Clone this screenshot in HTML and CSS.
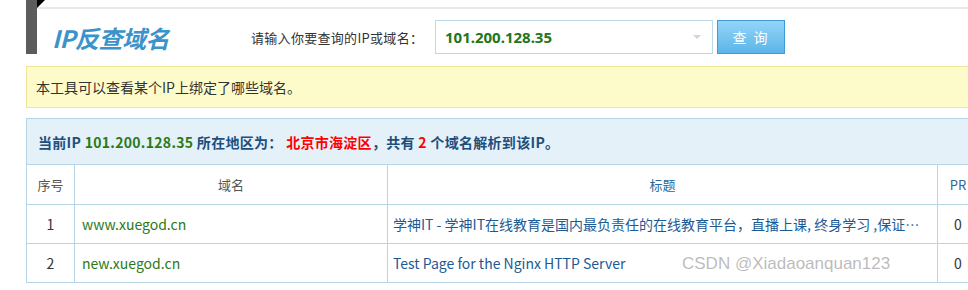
FILE: index.html
```html
<!DOCTYPE html>
<html lang="zh-CN">
<head>
    <meta charset="UTF-8">
    <title>IP反查域名</title>
    <link rel="stylesheet" href="styles.css">
</head>
<body>
    <div class="page">
        <div class="head">
            <div class="bar"></div>
            <div class="head-main">
                <h1 class="title">IP反查域名</h1>
                <label class="label" for="ip">请输入你要查询的IP或域名：</label>
                <div class="input-box">
                    <input type="text" id="ip" value="101.200.128.35">
                    <span class="arrow"></span>
                </div>
                <button type="button" class="btn">查 询</button>
            </div>
        </div>

        <div class="notice">本工具可以查看某个IP上绑定了哪些域名。</div>

        <table class="result">
            <colgroup>
                <col class="c-no">
                <col class="c-domain">
                <col class="c-title">
                <col class="c-pr">
            </colgroup>
            <tr class="info">
                <td colspan="4">当前IP <span class="green">101.200.128.35</span> 所在地区为： <span class="red">北京市海淀区</span>，共有 <span class="red">2</span> 个域名解析到该IP。</td>
            </tr>
            <tr class="cols">
                <th>序号</th>
                <th>域名</th>
                <th class="blue">标题</th>
                <th class="blue">PR</th>
            </tr>
            <tr>
                <td class="num">1</td>
                <td class="domain">www.xuegod.cn</td>
                <td class="page-title"><div class="clip">学神IT - 学神IT在线教育是国内最负责任的在线教育平台，直播上课, 终身学习 ,保证就业，学神IT在线教育</div></td>
                <td class="num">0</td>
            </tr>
            <tr>
                <td class="num">2</td>
                <td class="domain">new.xuegod.cn</td>
                <td class="page-title"><div class="clip">Test Page for the Nginx HTTP Server</div></td>
                <td class="num">0</td>
            </tr>
        </table>
    </div>
    <div class="watermark">CSDN @Xiadaoanquan123</div>
</body>
</html>
```

FILE: styles.css
```css
html, body {
    margin: 0;
    overflow: hidden;
}
body {
    font-family: "Noto Sans CJK SC", "Noto Sans", sans-serif;
    font-size: 14px;
    color: #333;
    background: #fff;
    position: relative;
    height: 290px;
}
.page {
    width: 960px;
    padding-left: 26px;
}
.head {
    display: flex;
    height: 54px;
}
.bar {
    flex-shrink: 0;
    width: 11px;
    height: 54px;
    background: #5c5c5c;
    position: relative;
}
.bar::after {
    content: "";
    position: absolute;
    left: 11px;
    top: 0;
    border-left: 8px solid #000;
    border-top: 8px solid transparent;
    width: 0;
    height: 0;
    transform: scaleY(-1);
}
.head-main {
    flex: 1;
    display: flex;
    align-items: center;
    margin-top: 7px;
    border-top: 2px solid #e9e9e9;
    padding-top: 11px;
    align-self: flex-start;
    height: 34px;
}
.head-main > * {
    flex-shrink: 0;
}
.title {
    width: 214px;
    margin: 0;
    padding-left: 15px;
    box-sizing: border-box;
    font-size: 24px;
    font-style: italic;
    font-weight: bold;
    color: #3b93cb;
    letter-spacing: -0.5px;
}
.label {
    width: 184px;
    font-size: 13px;
    color: #333;
    letter-spacing: 0.3px;
}
.input-box {
    position: relative;
    width: 278px;
    height: 34px;
}
.input-box input {
    width: 100%;
    height: 100%;
    box-sizing: border-box;
    border: 1px solid #bcdbea;
    padding: 0 9px;
    font-family: "Noto Sans", "Noto Sans CJK SC", sans-serif;
    font-size: 15px;
    font-weight: bold;
    color: #23741a;
    outline: none;
}
.arrow {
    position: absolute;
    right: 12px;
    top: 15px;
    border-left: 4px solid transparent;
    border-right: 4px solid transparent;
    border-top: 4px solid #c6d9e2;
}
.btn {
    margin-left: 4px;
    width: 68px;
    height: 34px;
    border: 1px solid #3d9cd8;
    background: linear-gradient(#93d5f7, #5cb5e8);
    color: #fff;
    font-family: "Noto Sans CJK SC", sans-serif;
    font-size: 14px;
    letter-spacing: 2px;
    padding: 0;
}
.notice {
    margin-top: 12px;
    height: 40px;
    line-height: 40px;
    background: #fefbcb;
    border: 1px solid #f2e49a;
    padding-left: 9px;
    font-size: 14px;
    color: #333;
}
.result {
    margin-top: 10px;
    border-collapse: collapse;
    table-layout: fixed;
    width: 952px;
}
.c-no { width: 48px; }
.c-domain { width: 313px; }
.c-title { width: 550px; }
.c-pr { width: 41px; }
.result td, .result th {
    border: 1px solid #b6d5e6;
    padding: 0;
    height: 38px;
    font-weight: normal;
}
.info td {
    height: 45px;
    background: #e5f1f9;
    padding-left: 11px;
    font-weight: bold;
    color: #1d4f7c;
    font-size: 14px;
    letter-spacing: 0.3px;
}
.green {
    color: #2b7a18;
}
.red {
    color: #f00;
}
.cols th {
    height: 39px;
    font-size: 13px;
    color: #555;
}
.cols .blue {
    color: #2d6899;
}
.num {
    text-align: center;
    color: #333;
}
.result .domain {
    padding-left: 7px;
    color: #2b7a18;
}
.result .page-title {
    padding-left: 5px;
    padding-right: 6px;
    color: #1d5a94;
}
.clip {
    white-space: nowrap;
    overflow: hidden;
    text-overflow: ellipsis;
}
.watermark {
    position: absolute;
    left: 682px;
    top: 254px;
    font-family: "Liberation Sans", sans-serif;
    font-size: 17px;
    color: rgba(130, 130, 130, 0.55);
}
```
